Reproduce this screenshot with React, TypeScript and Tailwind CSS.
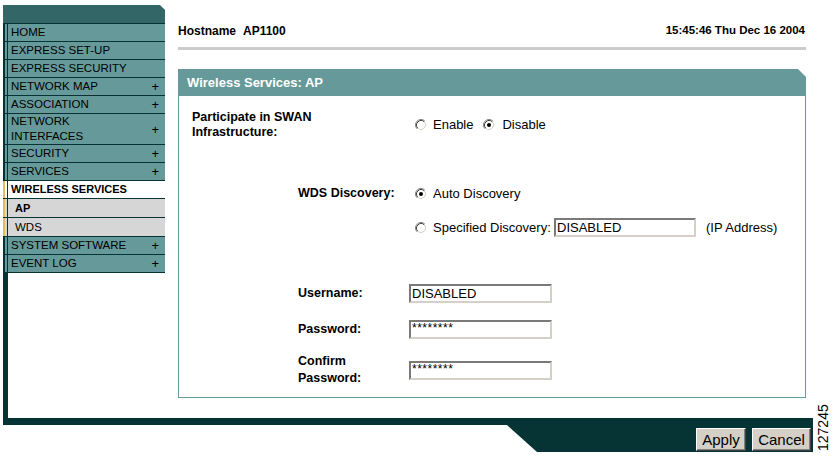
import React from "react";

const D = "bg-[#063333]";

function Radio({ checked }: { checked?: boolean }) {
  return (
    <svg width="12" height="12" viewBox="0 0 12 12" className="shrink-0 block">
      <circle cx="6" cy="6" r="5.5" fill="#ffffff" />
      <path d="M9.89 2.11 A5.5 5.5 0 0 0 2.11 9.89" stroke="#808080" fill="none" strokeWidth="1" />
      <path d="M9.18 2.82 A4.5 4.5 0 0 0 2.82 9.18" stroke="#404040" fill="none" strokeWidth="1" />
      <path d="M9.18 2.82 A4.5 4.5 0 0 1 2.82 9.18" stroke="#d4d0c8" fill="none" strokeWidth="1" />
      {checked && <circle cx="6" cy="6" r="2" fill="#000000" />}
    </svg>
  );
}

function TextBox({ value, w, password }: { value: string; w: string; password?: boolean }) {
  return (
    <div
      className={`${w} h-[19px] bg-white border-2 border-t-[#7a7a7a] border-l-[#7a7a7a] border-b-[#d4d0c8] border-r-[#d4d0c8] flex ${
        password ? "items-start pt-[1px]" : "items-center"
      } pl-[1px] overflow-hidden`}
    >
      {password ? (
        <span className="text-[12px] leading-[10px] tracking-[0.5px] text-black">{value}</span>
      ) : (
        <span className="text-[13px] leading-none text-black">{value}</span>
      )}
    </div>
  );
}

type Variant = "normal" | "active" | "sub";

function MenuRow({
  children,
  plus,
  variant = "normal",
  h = "h-[18px]",
  last,
  bold,
  indent,
}: {
  children: React.ReactNode;
  plus?: boolean;
  variant?: Variant;
  h?: string;
  last?: boolean;
  bold?: boolean;
  indent?: boolean;
}) {
  const bg = variant === "normal" ? "bg-[#669999]" : variant === "active" ? "bg-white" : "bg-[#d6d6d6]";
  const strip = variant === "normal" ? "bg-[#063333]" : "bg-[#e8bc5c]";
  return (
    <div className={`flex ${h} border-t border-[#063333] ${last ? "border-b" : ""} ${bg}`}>
      <div className={`w-[2px] ${strip}`} />
      <div className="w-[2px]" />
      <div className={`w-px ${D}`} />
      <div
        className={`flex-1 flex items-center justify-between pr-[6px] ${indent ? "pl-[7px]" : "pl-[3px]"} ${
          bold ? "font-bold text-[11px]" : "text-[11.5px]"
        } leading-[15px] text-black`}
      >
        <div>{children}</div>
        {plus && <span className="text-[13px] leading-none">+</span>}
      </div>
    </div>
  );
}

export default function App() {
  return (
    <div className="relative w-[833px] h-[457px] bg-white font-['Liberation_Sans',Arial,sans-serif] text-black overflow-hidden">
      <div className="flex h-[418px]">
        <aside className="w-[165px] shrink-0 pl-[3px] pt-[5px] flex flex-col">
          <div className="h-[18px] bg-[#336666] [clip-path:polygon(0_0,calc(100%-5px)_0,100%_5px,100%_100%,0_100%)]" />
          <MenuRow>HOME</MenuRow>
          <MenuRow>EXPRESS SET-UP</MenuRow>
          <MenuRow>EXPRESS SECURITY</MenuRow>
          <MenuRow plus>NETWORK MAP</MenuRow>
          <MenuRow plus>ASSOCIATION</MenuRow>
          <MenuRow plus h="h-[31px]">
            NETWORK
            <br />
            INTERFACES
          </MenuRow>
          <MenuRow plus>SECURITY</MenuRow>
          <MenuRow plus>SERVICES</MenuRow>
          <MenuRow variant="active" bold>
            WIRELESS SERVICES
          </MenuRow>
          <MenuRow variant="sub" bold indent h="h-[19px]">
            AP
          </MenuRow>
          <MenuRow variant="sub" indent h="h-[19px]">
            WDS
          </MenuRow>
          <MenuRow plus>SYSTEM SOFTWARE</MenuRow>
          <MenuRow plus last h="h-[19px]">
            EVENT LOG
          </MenuRow>
          <div className={`flex-1 w-[5px] ${D}`} />
        </aside>

        <main className="flex-1 pl-[13px] pr-[27px] flex flex-col">
          <div className="mt-[24px] h-[14px] flex items-center justify-between font-bold leading-none">
            <div className="flex text-[12px]">
              <span>Hostname</span>
              <span className="ml-[7px]">AP1100</span>
            </div>
            <span className="text-[11.5px] mr-[1px]">15:45:46 Thu Dec 16 2004</span>
          </div>
          <div className="mt-[9px] h-[3px] bg-[#cccccc]" />

          <div className="mt-[19px]">
            <div className="h-[27px] bg-[#669999] [clip-path:polygon(0_0,calc(100%-8px)_0,100%_8px,100%_100%,0_100%)] flex items-center pl-[9px] text-white font-bold text-[13px]">
              Wireless Services: AP
            </div>
            <div className="h-[302px] border border-t-0 border-[#669999] flex flex-col text-[13px]">
              {/* SWAN */}
              <div className="mt-[14px] pl-[13px] flex items-center">
                <div className="w-[223px] text-[12.5px] font-bold leading-[15px]">
                  Participate in SWAN
                  <br />
                  Infrastructure:
                </div>
                <Radio />
                <span className="ml-[6px]">Enable</span>
                <div className="ml-[10px]">
                  <Radio checked />
                </div>
                <span className="ml-[7px]">Disable</span>
              </div>

              {/* WDS Discovery */}
              <div className="mt-[44px] h-[19px] pl-[119px] flex items-center">
                <div className="w-[117px] text-[12.5px] font-bold">WDS Discovery:</div>
                <Radio checked />
                <span className="ml-[6px]">Auto Discovery</span>
              </div>
              <div className="mt-[15px] h-[19px] pl-[236px] flex items-center">
                <Radio />
                <span className="ml-[6px] w-[121px]">Specified Discovery:</span>
                <TextBox value="DISABLED" w="w-[142px]" />
                <span className="ml-[10px]">(IP Address)</span>
              </div>

              {/* Credentials */}
              <div className="mt-[47px] h-[19px] pl-[119px] flex items-center">
                <div className="w-[111px] text-[12.5px] font-bold">Username:</div>
                <TextBox value="DISABLED" w="w-[143px]" />
              </div>
              <div className="mt-[17px] h-[19px] pl-[119px] flex items-center">
                <div className="w-[111px] text-[12.5px] font-bold">Password:</div>
                <TextBox value="********" w="w-[143px]" password />
              </div>
              <div className="mt-[14px] pl-[119px] flex items-center">
                <div className="w-[111px] text-[12.5px] font-bold leading-[17px]">
                  Confirm
                  <br />
                  Password:
                </div>
                <TextBox value="********" w="w-[143px]" password />
              </div>
            </div>
          </div>
        </main>
      </div>

      <div className={`ml-[3px] w-[810px] h-[7px] ${D}`} />
      <div className="h-[27px] flex">
        <div
          className={`ml-[507px] w-[306px] h-full ${D} [clip-path:polygon(0_0,100%_0,100%_100%,30px_100%)] flex justify-end items-start pt-[3px] pr-[2px] gap-[6px]`}
        >
          <button className="w-[50px] h-[23px] bg-[#d4d0c8] border border-t-white border-l-white border-b-[#404040] border-r-[#404040] shadow-[inset_-1px_-1px_#808080] text-[15px] leading-none text-black flex items-center justify-center">
            Apply
          </button>
          <button className="w-[59px] h-[23px] bg-[#d4d0c8] border border-t-white border-l-white border-b-[#404040] border-r-[#404040] shadow-[inset_-1px_-1px_#808080] text-[15px] leading-none text-black flex items-center justify-center">
            Cancel
          </button>
        </div>
      </div>

      <div className="absolute left-[816px] top-[404px] h-[47px] w-[14px] [writing-mode:vertical-rl] rotate-180 text-[14px] leading-[14px] text-black flex items-center justify-center">
        127245
      </div>
    </div>
  );
}
